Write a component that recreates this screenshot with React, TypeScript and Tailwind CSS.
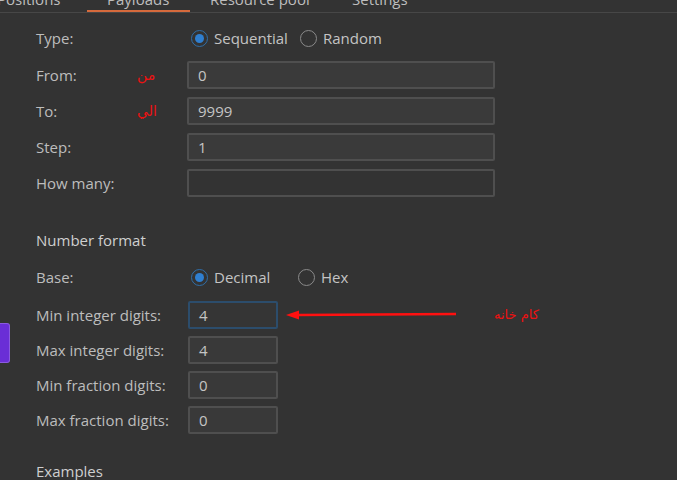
import React from "react";

const font = { fontFamily: '"Open Sans", "Noto Sans", sans-serif' };
const arabic = { fontFamily: '"DejaVu Sans", sans-serif' };

function Radio({ checked, label }: { checked?: boolean; label: string }) {
  return (
    <div className="flex items-center gap-[6px]">
      {checked ? (
        <span className="w-[17px] h-[17px] rounded-full border-[1.5px] border-[#2f6ea8] flex items-center justify-center">
          <span className="w-[9px] h-[9px] rounded-full bg-[#2f7fd0]" />
        </span>
      ) : (
        <span className="w-[17px] h-[17px] rounded-full border-[1.5px] border-[#8a8a8a]" />
      )}
      <span className="text-[#c4c4c4]">{label}</span>
    </div>
  );
}

function Field({ value, empty }: { value?: string; empty?: boolean }) {
  return (
    <div
      className={`w-[308px] h-[28px] rounded-[2px] border-2 border-[#4f4f4f] ${
        empty ? "bg-[#333333]" : "bg-[#3a3a3a]"
      } flex items-center px-[9px] text-[#c4c4c4]`}
    >
      {value}
    </div>
  );
}

function Small({ value, focused }: { value: string; focused?: boolean }) {
  return (
    <div
      className={`w-[90px] h-[28px] rounded-[2px] border-2 ${
        focused ? "border-[#2c4d6c] bg-[#353535]" : "border-[#4f4f4f] bg-[#393939]"
      } flex items-center px-[9px] text-[#c4c4c4]`}
    >
      {value}
    </div>
  );
}

export default function App() {
  return (
    <div className="w-[677px] h-[480px] bg-[#333333] relative overflow-hidden text-[15px] leading-[20px]" style={font}>
      {/* tab bar */}
      <div className="h-[13px] border-b border-[#474747] relative overflow-hidden">
        <div className="flex h-[13px] text-[#bdbdbd]">
          <div className="w-[90px] -ml-[3px] -mt-[11px]">Positions</div>
          <div className="w-[103px] h-[13px] relative">
            <span className="absolute top-[-11px] left-[20px]">Payloads</span>
            <span className="absolute bottom-0 left-0 right-0 h-[3px] bg-[#d66a3c]" />
          </div>
          <div className="w-[142px] pl-[20px] -mt-[11px]">Resource pool</div>
          <div className="pl-[20px] -mt-[11px]">Settings</div>
        </div>
      </div>

      <div className="pl-[36px] pt-[11px] text-[#bdbdbd]">
        <div className="flex items-center h-[28px]">
          <div className="w-[155px]">Type:</div>
          <div className="flex items-center gap-[12px]">
            <Radio checked label="Sequential" />
            <Radio label="Random" />
          </div>
        </div>

        <div className="flex flex-col gap-[8px] mt-[9px]">
          <div className="flex items-center">
            <div className="w-[101px]">From:</div>
            <div className="w-[50px] text-[#ee1111] text-[14px]" style={arabic}>من</div>
            <Field value="0" />
          </div>
          <div className="flex items-center">
            <div className="w-[101px]">To:</div>
            <div className="w-[50px] text-[#ee1111] text-[14px]" style={arabic}>الي</div>
            <Field value="9999" />
          </div>
          <div className="flex items-center">
            <div className="w-[151px]">Step:</div>
            <Field value="1" />
          </div>
          <div className="flex items-center">
            <div className="w-[151px]">How many:</div>
            <Field empty />
          </div>
        </div>

        <div className="mt-[33px] text-[#cfcfcf]">Number format</div>

        <div className="flex items-center h-[28px] mt-[13px]">
          <div className="w-[155px]">Base:</div>
          <div className="flex items-center">
            <div className="w-[107px]">
              <Radio checked label="Decimal" />
            </div>
            <Radio label="Hex" />
          </div>
        </div>

        <div className="flex flex-col gap-[7px] mt-[10px]">
          <div className="flex items-center">
            <div className="w-[152px]">Min integer digits:</div>
            <Small value="4" focused />
            <div className="ml-[8px] flex items-center">
              <svg width="172" height="10" viewBox="0 0 172 10">
                <polygon points="0,5 13,0.5 13,9.5" fill="#ff1010" />
                <line x1="12" y1="5" x2="170" y2="4" stroke="#ff1010" strokeWidth="2.5" />
              </svg>
              <span className="ml-[36px] text-[#ee1111] text-[13px]" style={arabic}>
                كام خانه
              </span>
            </div>
          </div>
          <div className="flex items-center">
            <div className="w-[152px]">Max integer digits:</div>
            <Small value="4" />
          </div>
          <div className="flex items-center">
            <div className="w-[152px]">Min fraction digits:</div>
            <Small value="0" />
          </div>
          <div className="flex items-center">
            <div className="w-[152px]">Max fraction digits:</div>
            <Small value="0" />
          </div>
        </div>

        <div className="mt-[27px] text-[#cfcfcf]">Examples</div>
      </div>

      <div className="absolute left-0 top-[323px] w-[10px] h-[40px] bg-[#6a2ed6] rounded-r-[3px] border border-[#8b5ae0] border-l-0" />
    </div>
  );
}
